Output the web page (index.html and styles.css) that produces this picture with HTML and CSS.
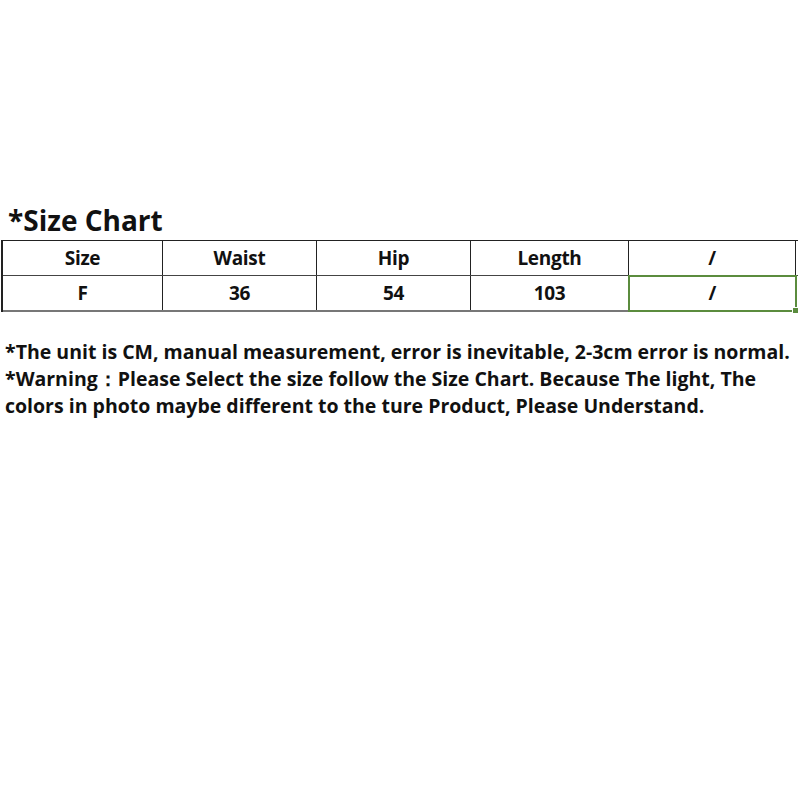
FILE: index.html
```html
<!DOCTYPE html>
<html>
<head>
<meta charset="utf-8">
<link rel="stylesheet" href="styles.css">
</head>
<body>
<div class="page">
  <h1 class="title">*Size Chart</h1>
  <div class="chart">
    <div class="row">
      <div class="cell c1">Size</div>
      <div class="cell c2">Waist</div>
      <div class="cell c3">Hip</div>
      <div class="cell c4">Length</div>
      <div class="cell c5">/</div>
    </div>
    <div class="row">
      <div class="cell c1">F</div>
      <div class="cell c2">36</div>
      <div class="cell c3">54</div>
      <div class="cell c4">103</div>
      <div class="cell c5 selected">/<span class="handle"></span></div>
    </div>
  </div>
  <div class="notes">
    <p>*The unit is CM, manual measurement, error is inevitable, 2-3cm error is normal.</p>
    <p>*Warning：Please Select the size follow the Size Chart. Because The light, The colors in photo maybe different to the ture Product, Please Understand.</p>
  </div>
</div>
</body>
</html>
```

FILE: styles.css
```css
html, body {
  margin: 0;
  padding: 0;
  background: #fff;
}
body {
  width: 800px;
  height: 800px;
  font-family: "Open Sans", "Noto Sans", sans-serif;
  font-weight: 700;
  color: #111;
}
.page {
  padding-top: 200px;
}
.title {
  margin: 0 0 0 8px;
  font-size: 28px;
  line-height: 40px;
  font-weight: 700;
  letter-spacing: 0;
}
.chart {
  margin-left: 1px;
  width: 795px;
  border-top: 1.5px solid #222;
  border-left: 2px solid #222;
}
.row {
  display: grid;
  grid-template-columns: 160px 154px 154px 158px 167px;
  height: 34px;
  border-bottom: 1.5px solid #444;
}
.row:last-child {
  border-bottom: 2px solid #777;
}
.cell {
  display: flex;
  align-items: center;
  justify-content: center;
  border-right: 1.5px solid #222;
  font-size: 19px;
  letter-spacing: -0.3px;
  position: relative;
}
.selected {
  border: 2px solid #5b8c3e;
  margin: -1.5px -1px -2px -1.5px;
}
.handle {
  position: absolute;
  right: -4px;
  bottom: -4px;
  width: 5px;
  height: 5px;
  background: #5b8c3e;
  border: 1px solid #fff;
}
.notes {
  margin-top: 26px;
  padding-left: 5px;
  padding-right: 4px;
  font-size: 19.5px;
  line-height: 27px;
  letter-spacing: 0;
}
.notes p {
  margin: 0;
}
```
